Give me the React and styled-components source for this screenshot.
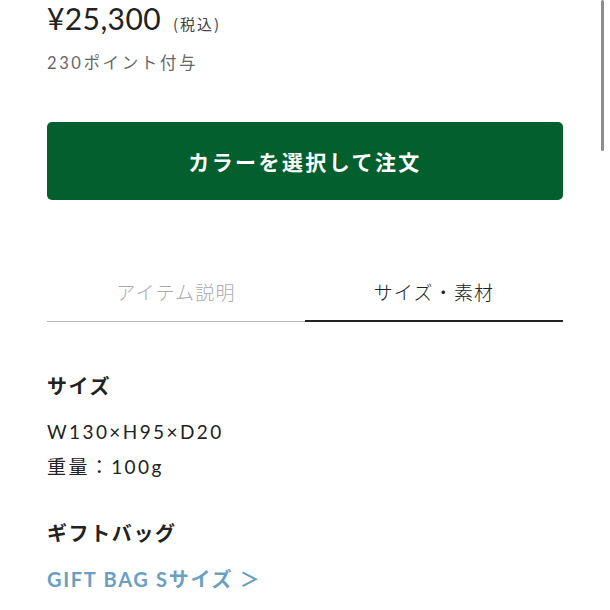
import React from "react";
import styled, { createGlobalStyle } from "styled-components";

const Global = createGlobalStyle`
  html, body { margin: 0; padding: 0; background: #fff; }
  body { font-family: Lato, "Noto Sans CJK JP", sans-serif; color: #222; overflow: hidden; }
`;

const Page = styled.div`
  width: 610px;
  height: 610px;
  position: relative;
  overflow: hidden;
`;

const Content = styled.div`
  padding: 0 47px;
  display: flex;
  flex-direction: column;
`;

const PriceRow = styled.div`
  display: flex;
  align-items: baseline;
  margin-top: -2px;
  height: 40px;
  line-height: 40px;
`;

const Price = styled.span`
  font-size: 30px;
  letter-spacing: 0.4px;
  color: #222;
`;

const Tax = styled.span`
  font-family: "Noto Sans CJK JP", sans-serif;
  font-size: 15px;
  letter-spacing: 2px;
  color: #444;
  margin-left: 12px;
`;

const Points = styled.div`
  font-size: 16.5px;
  line-height: 20px;
  color: #666;
  letter-spacing: 2.6px;
  margin-top: 15px;
`;

const OrderButton = styled.button`
  margin-top: 49px;
  height: 78px;
  width: 100%;
  border: none;
  border-radius: 5px;
  background: #045f2e;
  color: #fff;
  font-family: "Noto Sans CJK JP", sans-serif;
  font-weight: 700;
  font-size: 21px;
  letter-spacing: 2.4px;
  display: flex;
  align-items: center;
  justify-content: center;
  padding: 0;
`;

const Tabs = styled.div`
  margin-top: 74px;
  display: grid;
  grid-template-columns: 1fr 1fr;
`;

const Tab = styled.div`
  font-family: "Noto Sans CJK JP", sans-serif;
  font-weight: 300;
  font-size: 19px;
  letter-spacing: 1.2px;
  text-align: center;
  height: 48px;
  line-height: 36px;
  box-sizing: border-box;
  color: ${(p) => (p.$active ? "#222" : "#aaa")};
  border-bottom: ${(p) => (p.$active ? "2px solid #222" : "1px solid #b8b8b8")};
`;

const Section = styled.div`
  display: flex;
  flex-direction: column;
`;

const Heading = styled.div`
  font-family: "Noto Sans CJK JP", sans-serif;
  font-weight: 700;
  font-size: 20px;
  line-height: 28px;
  letter-spacing: 1.6px;
  color: #222;
  margin-top: ${(p) => p.$mt}px;
`;

const Line = styled.div`
  font-size: 19px;
  letter-spacing: 2.4px;
  color: #222;
  line-height: 35px;
  margin-top: ${(p) => p.$mt || 0}px;
`;

const Link = styled.a`
  display: block;
  margin-top: 18px;
  font-size: 20px;
  line-height: 28px;
  font-weight: 700;
  letter-spacing: 1.7px;
  color: #6a9fc2;
  text-decoration: none;
`;

const Scrollbar = styled.div`
  position: absolute;
  right: 6px;
  top: 0;
  width: 3px;
  height: 151px;
  background: #8c8c8c;
  border-radius: 2px;
`;

export default function App() {
  return (
    <Page>
      <Global />
      <Content>
        <PriceRow>
          <Price>¥25,300</Price>
          <Tax>(税込)</Tax>
        </PriceRow>
        <Points>230ポイント付与</Points>
        <OrderButton>カラーを選択して注文</OrderButton>
        <Tabs>
          <Tab>アイテム説明</Tab>
          <Tab $active>サイズ・素材</Tab>
        </Tabs>
        <Section>
          <Heading $mt={50}>サイズ</Heading>
          <Line $mt={14}>W130×H95×D20</Line>
          <Line>重量：100g</Line>
          <Heading $mt={35}>ギフトバッグ</Heading>
          <Link href="#">GIFT BAG Sサイズ ＞</Link>
        </Section>
      </Content>
      <Scrollbar />
    </Page>
  );
}
